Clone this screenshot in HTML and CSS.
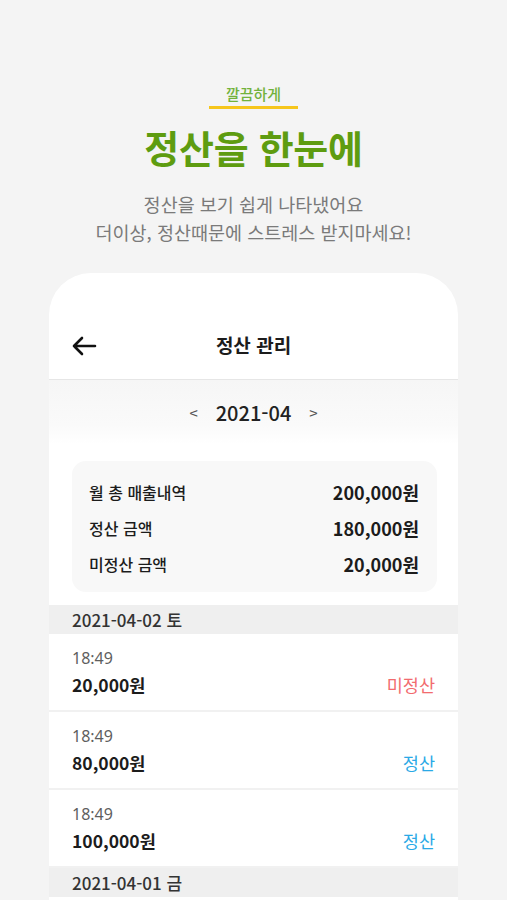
FILE: index.html
```html
<!DOCTYPE html>
<html lang="ko">
<head>
    <meta charset="UTF-8">
    <meta name="viewport" content="width=device-width, initial-scale=1.0">
    <title>정산을 한눈에</title>
    <link rel="stylesheet" href="styles.css">
</head>
<body>
    <section class="intro">
        <div class="intro-tag">깔끔하게</div>
        <h1 class="intro-title">정산을 한눈에</h1>
        <p class="intro-desc">정산을 보기 쉽게 나타냈어요<br>더이상, 정산때문에 스트레스 받지마세요!</p>
    </section>

    <div class="phone">
        <!-- Top bar -->
        <div class="topbar">
            <svg class="back-icon" width="26" height="22" viewBox="0 0 26 22" fill="none">
                <path d="M24 11H3M11 3L3 11L11 19" stroke="#111" stroke-width="2.6" stroke-linecap="round" stroke-linejoin="round"/>
            </svg>
            <div class="topbar-title">정산 관리</div>
        </div>

        <!-- Month picker -->
        <div class="month-nav">
            <span class="month-arrow">&lt;</span>
            <span class="month-label">2021-04</span>
            <span class="month-arrow">&gt;</span>
        </div>

        <!-- Summary -->
        <div class="summary">
            <div class="summary-row">
                <span class="summary-label">월 총 매출내역</span>
                <span class="summary-value">200,000원</span>
            </div>
            <div class="summary-row">
                <span class="summary-label">정산 금액</span>
                <span class="summary-value">180,000원</span>
            </div>
            <div class="summary-row">
                <span class="summary-label">미정산 금액</span>
                <span class="summary-value">20,000원</span>
            </div>
        </div>

        <div class="day-header">2021-04-02 토</div>
        <div class="entry">
            <div class="entry-time">18:49</div>
            <div class="entry-line">
                <span class="entry-amount">20,000원</span>
                <span class="entry-status unpaid">미정산</span>
            </div>
        </div>
        <div class="entry">
            <div class="entry-time">18:49</div>
            <div class="entry-line">
                <span class="entry-amount">80,000원</span>
                <span class="entry-status paid">정산</span>
            </div>
        </div>
        <div class="entry">
            <div class="entry-time">18:49</div>
            <div class="entry-line">
                <span class="entry-amount">100,000원</span>
                <span class="entry-status paid">정산</span>
            </div>
        </div>

        <div class="day-header">2021-04-01 금</div>
    </div>
</body>
</html>
```

FILE: styles.css
```css
:root {
    --bg-color: #f4f4f4;
    --green-color: #5e9c10;
    --light-green: #72b23c;
    --yellow-color: #f6c61c;
    --text-color: #1c1c1c;
    --gray-text: #7a7a7a;
    --red-color: #f26b6e;
    --blue-color: #2aa9e6;
}

body {
    margin: 0;
    background: var(--bg-color);
    font-family: 'Noto Sans CJK KR', 'Noto Sans', sans-serif;
    color: var(--text-color);
    overflow: hidden;
}

.intro {
    display: flex;
    flex-direction: column;
    align-items: center;
    padding-top: 83px;
}

.intro-tag {
    color: var(--light-green);
    font-size: 15px;
    font-weight: 500;
    line-height: 22px;
    padding: 0 17px 1px;
    border-bottom: 3px solid var(--yellow-color);
}

.intro-title {
    margin: 15px 0 0;
    color: var(--green-color);
    font-size: 38px;
    font-weight: 700;
    line-height: 46px;
    letter-spacing: -0.3px;
}

.intro-desc {
    margin: 20px 0 0;
    color: var(--gray-text);
    font-size: 18.5px;
    line-height: 28px;
    text-align: center;
}

.phone {
    margin: 27px 49px 0;
    min-height: 640px;
    background: #fff;
    border-radius: 42px 42px 0 0;
    overflow: hidden;
}

.topbar {
    position: relative;
    display: flex;
    align-items: center;
    justify-content: center;
    height: 70px;
    padding-top: 36px;
    border-bottom: 1px solid #e6e6e6;
}

.back-icon {
    position: absolute;
    left: 22px;
    top: 62px;
}

.topbar-title {
    font-size: 19px;
    font-weight: 700;
}

.month-nav {
    display: flex;
    align-items: center;
    justify-content: center;
    gap: 18px;
    height: 64px;
    background: linear-gradient(#f6f6f6, #fafafa 70%, #fff);
}

.month-arrow {
    color: #555;
    font-size: 15px;
}

.month-label {
    font-size: 20px;
    font-weight: 500;
    color: #222;
}

.summary {
    display: flex;
    flex-direction: column;
    gap: 11px;
    margin: 17px 21px 13px 23px;
    padding: 18px 18px 16px 17px;
    background: #f8f8f8;
    border-radius: 14px;
}

.summary-row {
    display: flex;
    justify-content: space-between;
    align-items: center;
    height: 25px;
}

.summary-label {
    font-size: 16px;
    font-weight: 500;
}

.summary-value {
    font-size: 18px;
    font-weight: 700;
}

.day-header {
    height: 29px;
    line-height: 29px;
    padding-left: 23px;
    background: #efefef;
    font-size: 17px;
    font-weight: 500;
    color: #333;
}

.entry {
    padding: 12px 23px 11px;
    border-bottom: 2px solid #f1f1f1;
}

.entry:last-of-type {
    border-bottom: none;
}

.entry-time {
    font-family: 'Noto Sans', 'Noto Sans CJK KR', sans-serif;
    font-size: 16px;
    line-height: 24px;
    color: #5e5e5e;
}

.entry-line {
    display: flex;
    justify-content: space-between;
    align-items: center;
    line-height: 29px;
}

.entry-amount {
    font-size: 17.5px;
    font-weight: 700;
}

.entry-status {
    font-size: 17.5px;
}

.unpaid {
    color: var(--red-color);
}

.paid {
    color: var(--blue-color);
}
```
